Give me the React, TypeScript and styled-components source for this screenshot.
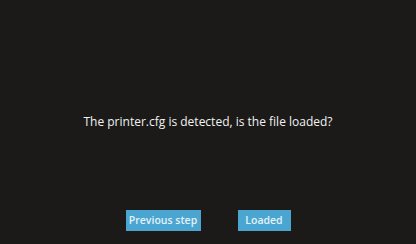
import React from "react";
import styled, { createGlobalStyle } from "styled-components";

const Global = createGlobalStyle`
  html, body { margin: 0; padding: 0; background: #1b1a18; }
  * { box-sizing: border-box; }
`;

const Screen = styled.div`
  width: 416px;
  height: 244px;
  background: #1b1a18;
  display: flex;
  flex-direction: column;
  align-items: center;
  padding-top: 113px;
  font-family: "Open Sans", "Noto Sans", sans-serif;
`;

const Message = styled.div`
  color: #f2f2f2;
  font-size: 12px;
  line-height: 18px;
  letter-spacing: 0;
`;

const Actions = styled.div`
  display: flex;
  gap: 37px;
  margin-top: 79px;
`;

const Button = styled.button<{ $w: number }>`
  width: ${(p) => p.$w}px;
  height: 21px;
  border: none;
  padding: 0;
  background: #4aa6d0;
  color: #e3f2f9;
  font-family: "Open Sans", "Noto Sans", sans-serif;
  font-size: 10.5px;
  font-weight: 600;
  line-height: 21px;
  text-align: center;
`;

export default function App() {
  return (
    <>
      <Global />
      <Screen>
        <Message>The printer.cfg is detected, is the file loaded?</Message>
        <Actions>
          <Button $w={75}>Previous step</Button>
          <Button $w={53}>Loaded</Button>
        </Actions>
      </Screen>
    </>
  );
}
